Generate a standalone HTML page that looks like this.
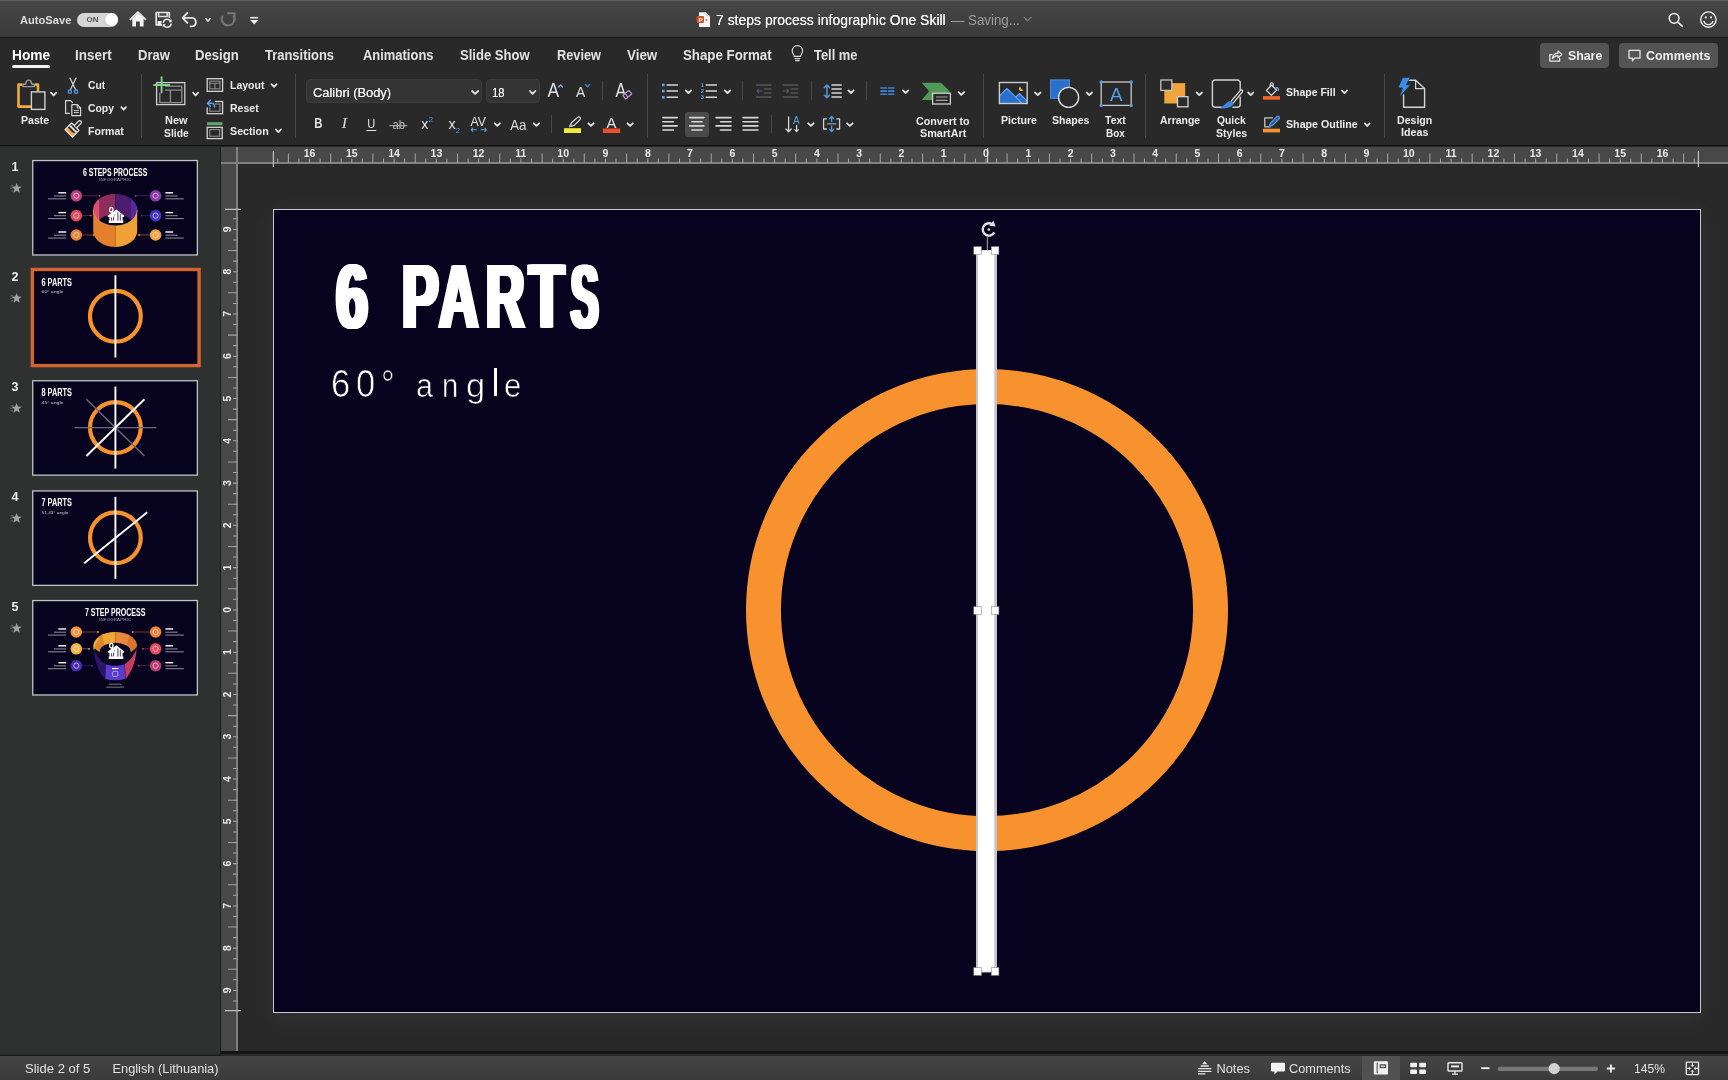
<!DOCTYPE html>
<html><head><meta charset="utf-8"><title>PowerPoint</title>
<style>

*{box-sizing:border-box;margin:0;padding:0}
html,body{width:1728px;height:1080px;overflow:hidden;background:#282828;font-family:"Liberation Sans",sans-serif;color:#e6e6e6}
#root{position:absolute;left:0;top:0;width:1728px;height:1080px;will-change:transform}
.abs{position:absolute}
.t{position:absolute;white-space:nowrap;line-height:1;transform-origin:0 50%}
#titlebar{position:absolute;left:0;top:0;width:1728px;height:38px;background:linear-gradient(#464646,#3a3a3a);border-top:1px solid #5c5c5c;border-bottom:1px solid #171717}
#ribbon{position:absolute;left:0;top:38px;width:1728px;height:108px;background:#292929;border-bottom:1px solid #101010}
#panel{position:absolute;left:0;top:147px;width:221px;height:907px;background:#2f3030}
#rulerh{position:absolute;left:221px;top:147px;width:1507px;height:17px;background:#484848}
#rlh{position:absolute;left:221px;top:162px;width:1507px;height:2px;background:#808080}
#rlv{position:absolute;left:236px;top:147px;width:2px;height:904px;background:#808080}
#pedge{position:absolute;left:220px;top:147px;width:1px;height:909px;background:#1e1e1e}
#rulerv{position:absolute;left:221px;top:147px;width:17px;height:904.5px;background:#484848}
#canvasbot{position:absolute;left:221px;top:1051px;width:1507px;height:5px;background:linear-gradient(#141414 0,#141414 55%,#2a2a2a 56%,#2a2a2a 100%)}
#status{position:absolute;left:0;top:1056px;width:1728px;height:24px;background:linear-gradient(#454545,#3a3a3a)}
#panelbot{position:absolute;left:0;top:1054.5px;width:221px;height:1.5px;background:#1a1a1a}
#slide{position:absolute;left:273px;top:209px;width:1428px;height:804px;background:#07021d;border:1.3px solid #c9c9d2;box-shadow:0 6px 26px 6px rgba(255,255,255,0.04)}
.tab{position:absolute;top:47px;font-size:14.2px;font-weight:bold;color:#e4e4e4;white-space:nowrap;line-height:16px;transform-origin:0 50%}
.lbl{position:absolute;font-size:11.3px;font-weight:bold;color:#e8e8e8;white-space:nowrap;line-height:12px;transform-origin:0 50%}
.sep{position:absolute;width:1px;background:#444;top:75px;height:63px}
.chev{position:absolute;width:9px;height:6px}

</style></head>
<body>
<div id="root">

<div id="titlebar"></div>
<div class="abs" style="left:77px;top:12.5px;width:41px;height:14px;border-radius:7px;background:#d6d6d6"></div>
<div class="abs" style="left:105px;top:13px;width:13px;height:13px;border-radius:7px;background:#fff;box-shadow:0 0 1px #888"></div>
<div class="t" style="left:86.5px;top:15.5px;font-size:8px;font-weight:bold;color:#555">ON</div>
<div class="t" style="left:19.6px;top:11px;line-height:18px;font-size:11.8px;color:#dedede;font-weight:bold;transform:scaleX(0.944);">AutoSave</div><div class="t" style="left:716.0px;top:10px;line-height:20px;font-size:14.2px;color:#f4f4f4;font-weight:normal;transform:scaleX(0.984);text-shadow:0 0 0.4px #f4f4f4;">7 steps process infographic One Skill</div><div class="t" style="left:950.5px;top:10px;line-height:20px;font-size:14px;color:#9c9c9c;font-weight:normal;transform:scaleX(0.951);">— Saving...</div>
<div id="ribbon"></div><div class="t" style="left:11.5px;top:45px;line-height:20px;font-size:14.6px;color:#ffffff;font-weight:bold;transform:scaleX(0.942);">Home</div><div class="t" style="left:74.6px;top:45px;line-height:20px;font-size:14.6px;color:#e2e2e2;font-weight:bold;transform:scaleX(0.923);">Insert</div><div class="t" style="left:137.5px;top:45px;line-height:20px;font-size:14.6px;color:#e2e2e2;font-weight:bold;transform:scaleX(0.891);">Draw</div><div class="t" style="left:194.8px;top:45px;line-height:20px;font-size:14.6px;color:#e2e2e2;font-weight:bold;transform:scaleX(0.900);">Design</div><div class="t" style="left:265.3px;top:45px;line-height:20px;font-size:14.6px;color:#e2e2e2;font-weight:bold;transform:scaleX(0.887);">Transitions</div><div class="t" style="left:362.9px;top:45px;line-height:20px;font-size:14.6px;color:#e2e2e2;font-weight:bold;transform:scaleX(0.887);">Animations</div><div class="t" style="left:460.4px;top:45px;line-height:20px;font-size:14.6px;color:#e2e2e2;font-weight:bold;transform:scaleX(0.895);">Slide Show</div><div class="t" style="left:557.1px;top:45px;line-height:20px;font-size:14.6px;color:#e2e2e2;font-weight:bold;transform:scaleX(0.876);">Review</div><div class="t" style="left:626.7px;top:45px;line-height:20px;font-size:14.6px;color:#e2e2e2;font-weight:bold;transform:scaleX(0.918);">View</div><div class="t" style="left:683.2px;top:45px;line-height:20px;font-size:14.6px;color:#e2e2e2;font-weight:bold;transform:scaleX(0.910);">Shape Format</div><div class="t" style="left:813.6px;top:45px;line-height:20px;font-size:14.6px;color:#e2e2e2;font-weight:bold;transform:scaleX(0.884);">Tell me</div><div class="abs" style="left:11.5px;top:65px;width:38.5px;height:3px;border-radius:1.5px;background:#f2f2f2"></div><div class="abs" style="left:1540px;top:42.7px;width:68.7px;height:25.6px;border-radius:4px;background:#545454"></div><div class="abs" style="left:1618.7px;top:42.7px;width:99.3px;height:25.6px;border-radius:4px;background:#545454"></div><div class="t" style="left:1567.7px;top:46px;line-height:19px;font-size:13.6px;color:#efefef;font-weight:bold;transform:scaleX(0.907);">Share</div><div class="t" style="left:1646.3px;top:46px;line-height:19px;font-size:13.6px;color:#efefef;font-weight:bold;transform:scaleX(0.916);">Comments</div>
<div class="t" style="left:20.8px;top:112px;line-height:16px;font-size:10.8px;color:#ebebeb;font-weight:bold;transform:scaleX(0.978);">Paste</div><div class="t" style="left:87.7px;top:77px;line-height:16px;font-size:10.8px;color:#ebebeb;font-weight:bold;transform:scaleX(0.961);">Cut</div><div class="t" style="left:87.7px;top:100px;line-height:16px;font-size:10.8px;color:#ebebeb;font-weight:bold;transform:scaleX(0.963);">Copy</div><div class="t" style="left:87.7px;top:123px;line-height:16px;font-size:10.8px;color:#ebebeb;font-weight:bold;transform:scaleX(0.981);">Format</div><div class="t" style="left:165.0px;top:112px;line-height:16px;font-size:10.8px;color:#ebebeb;font-weight:bold;transform:scaleX(1.013);">New</div><div class="t" style="left:163.7px;top:125px;line-height:16px;font-size:10.8px;color:#ebebeb;font-weight:bold;transform:scaleX(0.957);">Slide</div><div class="t" style="left:229.5px;top:77px;line-height:16px;font-size:10.8px;color:#ebebeb;font-weight:bold;transform:scaleX(0.972);">Layout</div><div class="t" style="left:229.5px;top:100px;line-height:16px;font-size:10.8px;color:#ebebeb;font-weight:bold;transform:scaleX(0.976);">Reset</div><div class="t" style="left:229.5px;top:123px;line-height:16px;font-size:10.8px;color:#ebebeb;font-weight:bold;transform:scaleX(0.992);">Section</div><div class="t" style="left:916.4px;top:113px;line-height:16px;font-size:10.8px;color:#ebebeb;font-weight:bold;transform:scaleX(0.993);">Convert to</div><div class="t" style="left:920.0px;top:125px;line-height:16px;font-size:10.8px;color:#ebebeb;font-weight:bold;transform:scaleX(1.004);">SmartArt</div><div class="t" style="left:1001.0px;top:112px;line-height:16px;font-size:10.8px;color:#ebebeb;font-weight:bold;transform:scaleX(0.983);">Picture</div><div class="t" style="left:1051.6px;top:112px;line-height:16px;font-size:10.8px;color:#ebebeb;font-weight:bold;transform:scaleX(0.976);">Shapes</div><div class="t" style="left:1105.2px;top:112px;line-height:16px;font-size:10.8px;color:#ebebeb;font-weight:bold;transform:scaleX(0.972);">Text</div><div class="t" style="left:1106.2px;top:125px;line-height:16px;font-size:10.8px;color:#ebebeb;font-weight:bold;transform:scaleX(0.921);">Box</div><div class="t" style="left:1160.0px;top:112px;line-height:16px;font-size:10.8px;color:#ebebeb;font-weight:bold;transform:scaleX(0.971);">Arrange</div><div class="t" style="left:1217.3px;top:112px;line-height:16px;font-size:10.8px;color:#ebebeb;font-weight:bold;transform:scaleX(0.956);">Quick</div><div class="t" style="left:1215.8px;top:125px;line-height:16px;font-size:10.8px;color:#ebebeb;font-weight:bold;transform:scaleX(0.980);">Styles</div><div class="t" style="left:1286.0px;top:84px;line-height:16px;font-size:10.8px;color:#ebebeb;font-weight:bold;transform:scaleX(0.972);">Shape Fill</div><div class="t" style="left:1286.0px;top:116px;line-height:16px;font-size:10.8px;color:#ebebeb;font-weight:bold;transform:scaleX(0.989);">Shape Outline</div><div class="t" style="left:1397.0px;top:112px;line-height:16px;font-size:10.8px;color:#ebebeb;font-weight:bold;transform:scaleX(0.980);">Design</div><div class="t" style="left:1400.5px;top:124px;line-height:16px;font-size:10.8px;color:#ebebeb;font-weight:bold;transform:scaleX(0.996);">Ideas</div><div class="abs" style="left:306.4px;top:79.3px;width:176.1px;height:24px;border-radius:4px;background:#343434;border:1px solid #3c3c3c"></div><div class="abs" style="left:485.6px;top:79.3px;width:54.2px;height:24px;border-radius:4px;background:#343434;border:1px solid #3c3c3c"></div><div class="t" style="left:312.7px;top:83px;line-height:19px;font-size:13px;color:#f0f0f0;font-weight:normal;transform:scaleX(0.992);text-shadow:0 0 0.5px #f0f0f0;">Calibri (Body)</div><div class="t" style="left:491.8px;top:83px;line-height:19px;font-size:13px;color:#f0f0f0;font-weight:normal;transform:scaleX(0.864);text-shadow:0 0 0.5px #f0f0f0;">18</div><div class="abs" style="left:685.2px;top:112px;width:23.8px;height:24.6px;border-radius:3px;background:#4a4a4a"></div><div class="abs" style="left:141.0px;top:74px;width:1px;height:63.6px;background:#474747"></div><div class="abs" style="left:294.6px;top:74px;width:1px;height:63.6px;background:#474747"></div><div class="abs" style="left:647.2px;top:74px;width:1px;height:63.6px;background:#474747"></div><div class="abs" style="left:983.4px;top:74px;width:1px;height:63.6px;background:#474747"></div><div class="abs" style="left:1144.9px;top:74px;width:1px;height:63.6px;background:#474747"></div><div class="abs" style="left:1383.5px;top:74px;width:1px;height:63.6px;background:#474747"></div><div class="abs" style="left:601.8px;top:81.4px;width:1px;height:18.6px;background:#474747"></div><div class="abs" style="left:551.3px;top:115.3px;width:1px;height:18.2px;background:#474747"></div><div class="abs" style="left:741.8px;top:81.4px;width:1px;height:18.6px;background:#474747"></div><div class="abs" style="left:811.1px;top:81.4px;width:1px;height:18.6px;background:#474747"></div><div class="abs" style="left:865.9px;top:81.4px;width:1px;height:18.6px;background:#474747"></div><div class="abs" style="left:770.9px;top:115.3px;width:1px;height:18.2px;background:#474747"></div>
<div id="panel"></div><svg class="abs" style="left:0;top:0" width="221" height="1080" viewBox="0 0 221 1080"><rect x="32.1" y="159.9" width="165.9" height="95.7" fill="#c2c2c6"/><rect x="33.4" y="161.2" width="163.3" height="93.1" fill="#07021d"/><text transform="translate(83.0 176.3) scale(0.668 1)" font-family="Liberation Sans" font-size="10.4" font-weight="bold" fill="#fff">6 STEPS PROCESS</text><text transform="translate(99.3 180.9) scale(1.388 1)" font-family="Liberation Sans" font-size="3.3" font-weight="normal" fill="#9a98ac">INFOGRAPHIC</text><path d="M93.2 209.9A22.0 16.0 0 0 1 115.2 193.9V225.9A22.0 16.0 0 0 1 93.2 209.9Z" fill="#8c2d5a"/><path d="M137.2 209.9A22.0 16.0 0 0 0 115.2 193.9V225.9A22.0 16.0 0 0 0 137.2 209.9Z" fill="#4c1c6e"/><path d="M93.2 209.9A22.0 16.0 0 0 1 99.2 198.9V220.9A22.0 16.0 0 0 1 93.2 209.9Z" fill="#de4e68"/><path d="M137.2 209.9A22.0 16.0 0 0 0 131.2 198.9V220.9A22.0 16.0 0 0 0 137.2 209.9Z" fill="#552a9c"/><ellipse cx="115.2" cy="221.1" rx="15.6" ry="6.6" fill="#0a0420"/><path d="M93.2 209.9A22.0 16.0 0 0 0 115.2 225.9V246.9A22.0 16.0 0 0 1 93.2 230.9Z" fill="#e57f2c"/><path d="M137.2 209.9A22.0 16.0 0 0 1 115.2 225.9V246.9A22.0 16.0 0 0 0 137.2 230.9Z" fill="#f0a034"/><path d="M93.2 209.9A22.0 16.0 0 0 0 137.2 209.9" fill="none" stroke="#ffb868" stroke-width="0.8" opacity="0.8"/><path d="M115.2 225.9V246.9" stroke="#b8621c" stroke-width="0.6"/><path d="M107.4 215.9L116.4 209.4L124.5 215.9L123.6 216.9H122.6V220.6H123.3V223.0H108.7V220.6H109.4V216.9H108.3Z" fill="#fff"/><path d="M111.6 217.4V220.6M114.3 214.6L113.2 220.6M117.9 212.4V220.6M120.3 214.4V220.6" stroke="#160a30" stroke-width="0.8" fill="none"/><ellipse cx="111.3" cy="209.7" rx="1.7" ry="2.3" fill="none" stroke="#fff" stroke-width="1.3"/><path d="M111.6 212.0L114.6 217.0" stroke="#fff" stroke-width="1.4"/><path d="M82 195.8H99.6" stroke="#bf3f78" stroke-width="0.6" opacity="0.75"/><circle cx="99.6" cy="195.8" r="0.9" fill="#bf3f78"/><path d="M150 195.8H135.6" stroke="#8a3aa8" stroke-width="0.6" opacity="0.75"/><circle cx="135.6" cy="195.8" r="0.9" fill="#8a3aa8"/><circle cx="76.3" cy="195.8" r="5.8" fill="#bf3f78"/><circle cx="155.6" cy="195.8" r="5.8" fill="#8a3aa8"/><circle cx="76.3" cy="195.8" r="2.6" fill="none" stroke="#ffffff" stroke-opacity="0.75" stroke-width="0.8"/><circle cx="155.6" cy="195.8" r="2.6" fill="none" stroke="#ffffff" stroke-opacity="0.75" stroke-width="0.8"/><rect x="58.4" y="192.1" width="7.8" height="1.4" fill="#fff"/><rect x="54" y="195.5" width="12.2" height="0.9" fill="#c8c8d4" opacity="0.8"/><rect x="48" y="198.4" width="18.2" height="0.9" fill="#c8c8d4" opacity="0.8"/><rect x="165.4" y="192.1" width="7.8" height="1.4" fill="#fff"/><rect x="165.4" y="195.5" width="12.2" height="0.9" fill="#c8c8d4" opacity="0.8"/><rect x="165.4" y="198.4" width="18.4" height="0.9" fill="#c8c8d4" opacity="0.8"/><path d="M82 215.6H91" stroke="#e54a5c" stroke-width="0.6" opacity="0.75"/><circle cx="91" cy="215.6" r="0.9" fill="#e54a5c"/><path d="M150 215.6H141.6" stroke="#4535bd" stroke-width="0.6" opacity="0.75"/><circle cx="141.6" cy="215.6" r="0.9" fill="#4535bd"/><circle cx="76.3" cy="215.6" r="5.8" fill="#e54a5c"/><circle cx="155.6" cy="215.6" r="5.8" fill="#4535bd"/><circle cx="76.3" cy="215.6" r="2.6" fill="none" stroke="#ffffff" stroke-opacity="0.75" stroke-width="0.8"/><circle cx="155.6" cy="215.6" r="2.6" fill="none" stroke="#ffffff" stroke-opacity="0.75" stroke-width="0.8"/><rect x="58.4" y="211.9" width="7.8" height="1.4" fill="#fff"/><rect x="54" y="215.3" width="12.2" height="0.9" fill="#c8c8d4" opacity="0.8"/><rect x="48" y="218.2" width="18.2" height="0.9" fill="#c8c8d4" opacity="0.8"/><rect x="165.4" y="211.9" width="7.8" height="1.4" fill="#fff"/><rect x="165.4" y="215.3" width="12.2" height="0.9" fill="#c8c8d4" opacity="0.8"/><rect x="165.4" y="218.2" width="18.4" height="0.9" fill="#c8c8d4" opacity="0.8"/><path d="M82 235.0H93.6" stroke="#f07f3a" stroke-width="0.6" opacity="0.75"/><circle cx="93.6" cy="235.0" r="0.9" fill="#f07f3a"/><path d="M150 235.0H139" stroke="#f5a243" stroke-width="0.6" opacity="0.75"/><circle cx="139" cy="235.0" r="0.9" fill="#f5a243"/><circle cx="76.3" cy="235.0" r="5.8" fill="#f07f3a"/><circle cx="155.6" cy="235.0" r="5.8" fill="#f5a243"/><circle cx="76.3" cy="235.0" r="2.6" fill="none" stroke="#ffffff" stroke-opacity="0.75" stroke-width="0.8"/><circle cx="155.6" cy="235.0" r="2.6" fill="none" stroke="#ffffff" stroke-opacity="0.75" stroke-width="0.8"/><rect x="58.4" y="231.3" width="7.8" height="1.4" fill="#fff"/><rect x="54" y="234.7" width="12.2" height="0.9" fill="#c8c8d4" opacity="0.8"/><rect x="48" y="237.6" width="18.2" height="0.9" fill="#c8c8d4" opacity="0.8"/><rect x="165.4" y="231.3" width="7.8" height="1.4" fill="#fff"/><rect x="165.4" y="234.7" width="12.2" height="0.9" fill="#c8c8d4" opacity="0.8"/><rect x="165.4" y="237.6" width="18.4" height="0.9" fill="#c8c8d4" opacity="0.8"/><rect x="30.7" y="267.8" width="170.1" height="99.5" fill="#d2652f"/><rect x="34.1" y="271.2" width="163.3" height="92.7" fill="#07021d"/><text transform="translate(41.5 285.8) scale(0.681 1)" font-family="Liberation Sans" font-size="10.8" font-weight="bold" fill="#fff">6 PARTS</text><text transform="translate(41.5 293.2) scale(1.298 1)" font-family="Liberation Sans" font-size="4.0" font-weight="normal" fill="#cfcfda">60° angle</text><circle cx="115.4" cy="316.3" r="25.4" fill="none" stroke="#f7922d" stroke-width="4.2"/><path d="M115.4 275.3L115.4 357.5" stroke="#ffffff" stroke-width="1.9"/><rect x="32.1" y="380.1" width="165.9" height="95.7" fill="#c2c2c6"/><rect x="33.4" y="381.4" width="163.3" height="93.1" fill="#07021d"/><text transform="translate(41.5 396.2) scale(0.681 1)" font-family="Liberation Sans" font-size="10.8" font-weight="bold" fill="#fff">8 PARTS</text><text transform="translate(41.5 403.6) scale(1.298 1)" font-family="Liberation Sans" font-size="4.0" font-weight="normal" fill="#cfcfda">45° angle</text><circle cx="115.4" cy="427.6" r="25.4" fill="none" stroke="#f7922d" stroke-width="4.2"/><path d="M74.4 427.6L156.4 427.6" stroke="#6b687c" stroke-width="1.4"/><path d="M86.4 399.2L144.4 456.0" stroke="#6b687c" stroke-width="1.4"/><path d="M115.4 386.6L115.4 468.6" stroke="#ffffff" stroke-width="1.9"/><path d="M86.4 456.0L144.4 399.2" stroke="#ffffff" stroke-width="1.9"/><rect x="32.1" y="490.3" width="165.9" height="95.7" fill="#c2c2c6"/><rect x="33.4" y="491.6" width="163.3" height="93.1" fill="#07021d"/><text transform="translate(41.5 506.4) scale(0.681 1)" font-family="Liberation Sans" font-size="10.8" font-weight="bold" fill="#fff">7 PARTS</text><text transform="translate(41.5 513.8) scale(1.200 1)" font-family="Liberation Sans" font-size="4.0" font-weight="normal" fill="#cfcfda">51,43° angle</text><circle cx="115.4" cy="537.8" r="25.4" fill="none" stroke="#f7922d" stroke-width="4.2"/><path d="M115.4 496.8L115.4 578.8" stroke="#ffffff" stroke-width="1.9"/><path d="M84.2 563.2L147.2 512.2" stroke="#ffffff" stroke-width="1.9"/><rect x="32.1" y="599.9" width="165.9" height="95.7" fill="#c2c2c6"/><rect x="33.4" y="601.2" width="163.3" height="93.1" fill="#07021d"/><text transform="translate(84.9 616.3) scale(0.678 1)" font-family="Liberation Sans" font-size="10.4" font-weight="bold" fill="#fff">7 STEP PROCESS</text><text transform="translate(99.3 620.9) scale(1.388 1)" font-family="Liberation Sans" font-size="3.3" font-weight="normal" fill="#9a98ac">INFOGRAPHIC</text><path d="M93.5 646.4A21.7 13.5 0 0 1 115.2 631.9V654.9A21.7 11.5 0 0 1 93.5 646.4Z" fill="#dd8a2c"/><path d="M136.9 646.4A21.7 13.5 0 0 0 115.2 631.9V654.9A21.7 11.5 0 0 0 136.9 646.4Z" fill="#d8742e"/><path d="M102.2 634.8L106.2 652.4L114.8 653.4V631.9Q108.2 632.3 102.2 634.8Z" fill="#f0a83a"/><path d="M115.60000000000001 631.9V653.4L125.2 652.4L129.2 635.4Q122.2 632.3 115.60000000000001 631.9Z" fill="#e8883a"/><path d="M93.9 649.4Q94.1 642.4 98.5 638.4" fill="none" stroke="#f2c445" stroke-width="1.3"/><ellipse cx="115.2" cy="651.4" rx="15.4" ry="8.6" fill="#0a0420"/><path d="M93.8 648.4C94.5 661.4 98.5 671.4 104.7 678.9L105.60000000000001 664.0C101.2 661.4 96.2 655.4 93.8 648.4Z" fill="#2b1568"/><path d="M136.6 648.4C135.9 661.4 131.9 671.4 125.7 678.9L124.8 664.0C129.2 661.4 134.2 655.4 136.6 648.4Z" fill="#c63c5e"/><path d="M105.8 664.1999999999999Q115.2 667.4 124.60000000000001 664.1999999999999L125.2 679.0Q115.2 681.6 105.2 679.0Z" fill="#5a3bcc"/><rect x="112.0" y="668.0" width="6.4" height="1.1" fill="#fff"/><rect x="112.6" y="671.4" width="5.2" height="5" rx="1" fill="none" stroke="#e6e0ff" stroke-width="0.6"/><rect x="109" y="683.7" width="12.4" height="0.9" fill="#b8b8c8" opacity="0.7"/><rect x="106.4" y="686.7" width="17.6" height="0.9" fill="#b8b8c8" opacity="0.7"/><path d="M107.4 651.8L116.4 645.3L124.5 651.8L123.6 652.8H122.6V656.5H123.3V658.9H108.7V656.5H109.4V652.8H108.3Z" fill="#fff"/><path d="M111.6 653.3V656.5M114.3 650.5L113.2 656.5M117.9 648.3V656.5M120.3 650.3V656.5" stroke="#160a30" stroke-width="0.8" fill="none"/><ellipse cx="111.3" cy="645.6" rx="1.7" ry="2.3" fill="none" stroke="#fff" stroke-width="1.3"/><path d="M111.6 647.9L114.6 652.9" stroke="#fff" stroke-width="1.4"/><path d="M82 632.0H98" stroke="#f5923a" stroke-width="0.6" opacity="0.75"/><circle cx="98" cy="632.0" r="0.9" fill="#f5923a"/><path d="M150 632.0H132.6" stroke="#f07f3a" stroke-width="0.6" opacity="0.75"/><circle cx="132.6" cy="632.0" r="0.9" fill="#f07f3a"/><circle cx="76.3" cy="632.0" r="5.8" fill="#f5923a"/><circle cx="155.6" cy="632.0" r="5.8" fill="#f07f3a"/><circle cx="76.3" cy="632.0" r="2.6" fill="none" stroke="#ffffff" stroke-opacity="0.75" stroke-width="0.8"/><circle cx="155.6" cy="632.0" r="2.6" fill="none" stroke="#ffffff" stroke-opacity="0.75" stroke-width="0.8"/><rect x="58.4" y="628.3" width="7.8" height="1.4" fill="#fff"/><rect x="54" y="631.7" width="12.2" height="0.9" fill="#c8c8d4" opacity="0.8"/><rect x="48" y="634.6" width="18.2" height="0.9" fill="#c8c8d4" opacity="0.8"/><rect x="165.4" y="628.3" width="7.8" height="1.4" fill="#fff"/><rect x="165.4" y="631.7" width="12.2" height="0.9" fill="#c8c8d4" opacity="0.8"/><rect x="165.4" y="634.6" width="18.4" height="0.9" fill="#c8c8d4" opacity="0.8"/><path d="M82 648.8H89" stroke="#f5b243" stroke-width="0.6" opacity="0.75"/><circle cx="89" cy="648.8" r="0.9" fill="#f5b243"/><path d="M150 648.8H143" stroke="#e54a5c" stroke-width="0.6" opacity="0.75"/><circle cx="143" cy="648.8" r="0.9" fill="#e54a5c"/><circle cx="76.3" cy="648.8" r="5.8" fill="#f5b243"/><circle cx="155.6" cy="648.8" r="5.8" fill="#e54a5c"/><circle cx="76.3" cy="648.8" r="2.6" fill="none" stroke="#ffffff" stroke-opacity="0.75" stroke-width="0.8"/><circle cx="155.6" cy="648.8" r="2.6" fill="none" stroke="#ffffff" stroke-opacity="0.75" stroke-width="0.8"/><rect x="58.4" y="645.1" width="7.8" height="1.4" fill="#fff"/><rect x="54" y="648.5" width="12.2" height="0.9" fill="#c8c8d4" opacity="0.8"/><rect x="48" y="651.4" width="18.2" height="0.9" fill="#c8c8d4" opacity="0.8"/><rect x="165.4" y="645.1" width="7.8" height="1.4" fill="#fff"/><rect x="165.4" y="648.5" width="12.2" height="0.9" fill="#c8c8d4" opacity="0.8"/><rect x="165.4" y="651.4" width="18.4" height="0.9" fill="#c8c8d4" opacity="0.8"/><path d="M82 665.7H92" stroke="#4a2ab2" stroke-width="0.6" opacity="0.75"/><circle cx="92" cy="665.7" r="0.9" fill="#4a2ab2"/><path d="M150 665.7H138.6" stroke="#b93a74" stroke-width="0.6" opacity="0.75"/><circle cx="138.6" cy="665.7" r="0.9" fill="#b93a74"/><circle cx="76.3" cy="665.7" r="5.8" fill="#4a2ab2"/><circle cx="155.6" cy="665.7" r="5.8" fill="#b93a74"/><circle cx="76.3" cy="665.7" r="2.6" fill="none" stroke="#ffffff" stroke-opacity="0.75" stroke-width="0.8"/><circle cx="155.6" cy="665.7" r="2.6" fill="none" stroke="#ffffff" stroke-opacity="0.75" stroke-width="0.8"/><rect x="58.4" y="662.0" width="7.8" height="1.4" fill="#fff"/><rect x="54" y="665.4" width="12.2" height="0.9" fill="#c8c8d4" opacity="0.8"/><rect x="48" y="668.3" width="18.2" height="0.9" fill="#c8c8d4" opacity="0.8"/><rect x="165.4" y="662.0" width="7.8" height="1.4" fill="#fff"/><rect x="165.4" y="665.4" width="12.2" height="0.9" fill="#c8c8d4" opacity="0.8"/><rect x="165.4" y="668.3" width="18.4" height="0.9" fill="#c8c8d4" opacity="0.8"/><text x="14.9" y="171.2" text-anchor="middle" font-family="Liberation Sans" font-size="12.6" font-weight="bold" fill="#f2f2f2">1</text><polygon points="16.6,183.0 18.0,186.5 21.7,186.7 18.8,189.1 19.8,192.8 16.6,190.7 13.4,192.8 14.4,189.1 11.5,186.7 15.2,186.5" fill="#a2a2a2"/><path d="M10.6 185.8H13.6M10 188.2H12.4M10.8 190.8H13" stroke="#6e6e6e" stroke-width="0.9"/><text x="14.9" y="281.2" text-anchor="middle" font-family="Liberation Sans" font-size="12.6" font-weight="bold" fill="#f2f2f2">2</text><polygon points="16.6,293.0 18.0,296.5 21.7,296.7 18.8,299.1 19.8,302.8 16.6,300.7 13.4,302.8 14.4,299.1 11.5,296.7 15.2,296.5" fill="#a2a2a2"/><path d="M10.6 295.8H13.6M10 298.2H12.4M10.8 300.8H13" stroke="#6e6e6e" stroke-width="0.9"/><text x="14.9" y="391.2" text-anchor="middle" font-family="Liberation Sans" font-size="12.6" font-weight="bold" fill="#f2f2f2">3</text><polygon points="16.6,403.0 18.0,406.5 21.7,406.7 18.8,409.1 19.8,412.8 16.6,410.7 13.4,412.8 14.4,409.1 11.5,406.7 15.2,406.5" fill="#a2a2a2"/><path d="M10.6 405.8H13.6M10 408.2H12.4M10.8 410.8H13" stroke="#6e6e6e" stroke-width="0.9"/><text x="14.9" y="501.2" text-anchor="middle" font-family="Liberation Sans" font-size="12.6" font-weight="bold" fill="#f2f2f2">4</text><polygon points="16.6,513.0 18.0,516.5 21.7,516.7 18.8,519.1 19.8,522.8 16.6,520.7 13.4,522.8 14.4,519.1 11.5,516.7 15.2,516.5" fill="#a2a2a2"/><path d="M10.6 515.8H13.6M10 518.2H12.4M10.8 520.8H13" stroke="#6e6e6e" stroke-width="0.9"/><text x="14.9" y="611.2" text-anchor="middle" font-family="Liberation Sans" font-size="12.6" font-weight="bold" fill="#f2f2f2">5</text><polygon points="16.6,623.0 18.0,626.5 21.7,626.7 18.8,629.1 19.8,632.8 16.6,630.7 13.4,632.8 14.4,629.1 11.5,626.7 15.2,626.5" fill="#a2a2a2"/><path d="M10.6 625.8H13.6M10 628.2H12.4M10.8 630.8H13" stroke="#6e6e6e" stroke-width="0.9"/></svg>
<div id="rulerh"></div><div id="rulerv"></div><div id="canvasbot"></div><div id="rlh"></div><div id="rlv"></div><div id="pedge"></div><div id="panelbot"></div>
<svg id="rulers" width="1728" height="1080" viewBox="0 0 1728 1080" style="position:absolute;left:0;top:0;font-family:'Liberation Sans',sans-serif">
<path d="M277.8 158.5v4.5M298.9 158.5v4.5M309.5 158.5v4.5M320.1 158.5v4.5M341.2 158.5v4.5M351.8 158.5v4.5M362.4 158.5v4.5M383.5 158.5v4.5M394.1 158.5v4.5M404.6 158.5v4.5M425.8 158.5v4.5M436.4 158.5v4.5M446.9 158.5v4.5M468.1 158.5v4.5M478.6 158.5v4.5M489.2 158.5v4.5M510.3 158.5v4.5M520.9 158.5v4.5M531.5 158.5v4.5M552.6 158.5v4.5M563.2 158.5v4.5M573.8 158.5v4.5M594.9 158.5v4.5M605.5 158.5v4.5M616.0 158.5v4.5M637.2 158.5v4.5M647.8 158.5v4.5M658.3 158.5v4.5M679.5 158.5v4.5M690.0 158.5v4.5M700.6 158.5v4.5M721.8 158.5v4.5M732.3 158.5v4.5M742.9 158.5v4.5M764.0 158.5v4.5M774.6 158.5v4.5M785.2 158.5v4.5M806.3 158.5v4.5M816.9 158.5v4.5M827.5 158.5v4.5M848.6 158.5v4.5M859.2 158.5v4.5M869.7 158.5v4.5M890.9 158.5v4.5M901.4 158.5v4.5M912.0 158.5v4.5M933.1 158.5v4.5M943.7 158.5v4.5M954.3 158.5v4.5M975.4 158.5v4.5M986.0 158.5v4.5M996.6 158.5v4.5M1017.7 158.5v4.5M1028.3 158.5v4.5M1038.8 158.5v4.5M1060.0 158.5v4.5M1070.6 158.5v4.5M1081.1 158.5v4.5M1102.3 158.5v4.5M1112.8 158.5v4.5M1123.4 158.5v4.5M1144.5 158.5v4.5M1155.1 158.5v4.5M1165.7 158.5v4.5M1186.8 158.5v4.5M1197.4 158.5v4.5M1208.0 158.5v4.5M1229.1 158.5v4.5M1239.7 158.5v4.5M1250.2 158.5v4.5M1271.4 158.5v4.5M1282.0 158.5v4.5M1292.5 158.5v4.5M1313.7 158.5v4.5M1324.2 158.5v4.5M1334.8 158.5v4.5M1356.0 158.5v4.5M1366.5 158.5v4.5M1377.1 158.5v4.5M1398.2 158.5v4.5M1408.8 158.5v4.5M1419.4 158.5v4.5M1440.5 158.5v4.5M1451.1 158.5v4.5M1461.7 158.5v4.5M1482.8 158.5v4.5M1493.4 158.5v4.5M1503.9 158.5v4.5M1525.1 158.5v4.5M1535.6 158.5v4.5M1546.2 158.5v4.5M1567.3 158.5v4.5M1577.9 158.5v4.5M1588.5 158.5v4.5M1609.6 158.5v4.5M1620.2 158.5v4.5M1630.8 158.5v4.5M1651.9 158.5v4.5M1662.5 158.5v4.5M1673.1 158.5v4.5M1694.2 158.5v4.5" stroke="#a2a2a2" stroke-width="1.05" fill="none"/><path d="M288.4 153.5v9.5M330.7 153.5v9.5M372.9 153.5v9.5M415.2 153.5v9.5M457.5 153.5v9.5M499.8 153.5v9.5M542.1 153.5v9.5M584.3 153.5v9.5M626.6 153.5v9.5M668.9 153.5v9.5M711.2 153.5v9.5M753.5 153.5v9.5M795.7 153.5v9.5M838.0 153.5v9.5M880.3 153.5v9.5M922.6 153.5v9.5M964.9 153.5v9.5M1007.1 153.5v9.5M1049.4 153.5v9.5M1091.7 153.5v9.5M1134.0 153.5v9.5M1176.3 153.5v9.5M1218.5 153.5v9.5M1260.8 153.5v9.5M1303.1 153.5v9.5M1345.4 153.5v9.5M1387.7 153.5v9.5M1429.9 153.5v9.5M1472.2 153.5v9.5M1514.5 153.5v9.5M1556.8 153.5v9.5M1599.1 153.5v9.5M1641.3 153.5v9.5M1683.6 153.5v9.5" stroke="#a2a2a2" stroke-width="1.05" fill="none"/><path d="M273.4 151v16M1698.4 151v16" stroke="#bcbcbc" stroke-width="1.25"/><path d="M987.6 148v15" stroke="#bcbcbc" stroke-width="1.25"/><g font-size="10.5" fill="#ececec" text-anchor="middle" font-weight="bold"><text x="309.5" y="157.3">16</text><text x="351.8" y="157.3">15</text><text x="394.1" y="157.3">14</text><text x="436.4" y="157.3">13</text><text x="478.6" y="157.3">12</text><text x="520.9" y="157.3">11</text><text x="563.2" y="157.3">10</text><text x="605.5" y="157.3">9</text><text x="647.8" y="157.3">8</text><text x="690.0" y="157.3">7</text><text x="732.3" y="157.3">6</text><text x="774.6" y="157.3">5</text><text x="816.9" y="157.3">4</text><text x="859.2" y="157.3">3</text><text x="901.4" y="157.3">2</text><text x="943.7" y="157.3">1</text><text x="986.0" y="157.3">0</text><text x="1028.3" y="157.3">1</text><text x="1070.6" y="157.3">2</text><text x="1112.8" y="157.3">3</text><text x="1155.1" y="157.3">4</text><text x="1197.4" y="157.3">5</text><text x="1239.7" y="157.3">6</text><text x="1282.0" y="157.3">7</text><text x="1324.2" y="157.3">8</text><text x="1366.5" y="157.3">9</text><text x="1408.8" y="157.3">10</text><text x="1451.1" y="157.3">11</text><text x="1493.4" y="157.3">12</text><text x="1535.6" y="157.3">13</text><text x="1577.9" y="157.3">14</text><text x="1620.2" y="157.3">15</text><text x="1662.5" y="157.3">16</text></g>
<path d="M233 218.8h4.5M233 229.4h4.5M233 239.9h4.5M228 250.5h9.5M233 261.1h4.5M233 271.7h4.5M233 282.2h4.5M228 292.8h9.5M233 303.4h4.5M233 313.9h4.5M233 324.5h4.5M228 335.1h9.5M233 345.6h4.5M233 356.2h4.5M233 366.8h4.5M228 377.4h9.5M233 387.9h4.5M233 398.5h4.5M233 409.1h4.5M228 419.6h9.5M233 430.2h4.5M233 440.8h4.5M233 451.3h4.5M228 461.9h9.5M233 472.5h4.5M233 483.1h4.5M233 493.6h4.5M228 504.2h9.5M233 514.8h4.5M233 525.3h4.5M233 535.9h4.5M228 546.5h9.5M233 557.0h4.5M233 567.6h4.5M233 578.2h4.5M228 588.8h9.5M233 599.3h4.5M233 609.9h4.5M233 620.5h4.5M228 631.0h9.5M233 641.6h4.5M233 652.2h4.5M233 662.8h4.5M228 673.3h9.5M233 683.9h4.5M233 694.5h4.5M233 705.0h4.5M228 715.6h9.5M233 726.2h4.5M233 736.7h4.5M233 747.3h4.5M228 757.9h9.5M233 768.5h4.5M233 779.0h4.5M233 789.6h4.5M228 800.2h9.5M233 810.7h4.5M233 821.3h4.5M233 831.9h4.5M228 842.4h9.5M233 853.0h4.5M233 863.6h4.5M233 874.1h4.5M228 884.7h9.5M233 895.3h4.5M233 905.9h4.5M233 916.4h4.5M228 927.0h9.5M233 937.6h4.5M233 948.1h4.5M233 958.7h4.5M228 969.3h9.5M233 979.8h4.5M233 990.4h4.5M233 1001.0h4.5" stroke="#a2a2a2" stroke-width="1.05" fill="none"/><path d="M225 209.4h16M225 1010.5h16" stroke="#bcbcbc" stroke-width="1.25"/><g font-size="10.5" fill="#ececec" text-anchor="middle" font-weight="bold"><text transform="translate(231.3 229.4) rotate(-90)" x="0" y="0">9</text><text transform="translate(231.3 271.7) rotate(-90)" x="0" y="0">8</text><text transform="translate(231.3 313.9) rotate(-90)" x="0" y="0">7</text><text transform="translate(231.3 356.2) rotate(-90)" x="0" y="0">6</text><text transform="translate(231.3 398.5) rotate(-90)" x="0" y="0">5</text><text transform="translate(231.3 440.8) rotate(-90)" x="0" y="0">4</text><text transform="translate(231.3 483.1) rotate(-90)" x="0" y="0">3</text><text transform="translate(231.3 525.3) rotate(-90)" x="0" y="0">2</text><text transform="translate(231.3 567.6) rotate(-90)" x="0" y="0">1</text><text transform="translate(231.3 609.9) rotate(-90)" x="0" y="0">0</text><text transform="translate(231.3 652.2) rotate(-90)" x="0" y="0">1</text><text transform="translate(231.3 694.5) rotate(-90)" x="0" y="0">2</text><text transform="translate(231.3 736.7) rotate(-90)" x="0" y="0">3</text><text transform="translate(231.3 779.0) rotate(-90)" x="0" y="0">4</text><text transform="translate(231.3 821.3) rotate(-90)" x="0" y="0">5</text><text transform="translate(231.3 863.6) rotate(-90)" x="0" y="0">6</text><text transform="translate(231.3 905.9) rotate(-90)" x="0" y="0">7</text><text transform="translate(231.3 948.1) rotate(-90)" x="0" y="0">8</text><text transform="translate(231.3 990.4) rotate(-90)" x="0" y="0">9</text></g>
</svg>
<div id="slide"></div><svg class="abs" style="left:0;top:0" width="1728" height="1080" viewBox="0 0 1728 1080">
<circle cx="987" cy="610.1" r="223.5" fill="none" stroke="#f7922e" stroke-width="35"/>
<rect x="976" y="250" width="21" height="722.5" fill="#c4c4d0"/>
<rect x="978" y="250.6" width="16.3" height="721" fill="#ffffff"/>
<path d="M987.3 236V250" stroke="#b0b0b8" stroke-width="1"/>
<circle cx="988.8" cy="229.4" r="8.2" fill="#05011a"/>
<path d="M994.4 232.4A6.2 6.2 0 1 1 991.9 224" fill="none" stroke="#e2e2e2" stroke-width="2.4"/>
<path d="M995.6 226.4L993.4 220.8L989.4 225.8Z" fill="#e2e2e2"/>
<circle cx="988.8" cy="229.5" r="1.3" fill="#dedede"/>
<rect x="973.8" y="246.7" width="7.6" height="7.6" fill="#fff" stroke="#8a8a92" stroke-width="0.6"/><rect x="973.8" y="606.7" width="7.6" height="7.6" fill="#fff" stroke="#8a8a92" stroke-width="0.6"/><rect x="973.8" y="967.7" width="7.6" height="7.6" fill="#fff" stroke="#8a8a92" stroke-width="0.6"/><rect x="991.3" y="246.7" width="7.6" height="7.6" fill="#fff" stroke="#8a8a92" stroke-width="0.6"/><rect x="991.3" y="606.7" width="7.6" height="7.6" fill="#fff" stroke="#8a8a92" stroke-width="0.6"/><rect x="991.3" y="967.7" width="7.6" height="7.6" fill="#fff" stroke="#8a8a92" stroke-width="0.6"/></svg><div class="t" style="left:335.70px;top:243px;line-height:106px;font-size:91.3px;color:#fff;transform-origin:0 50%;transform:scaleX(0.630);font-weight:bold;text-shadow:1.40px 0 0 #fff,-1.40px 0 0 #fff,2.77px 0 0 #fff,-2.77px 0 0 #fff,4.13px 0 0 #fff,-4.13px 0 0 #fff;">6</div><div class="t" style="left:401.50px;top:243px;line-height:106px;font-size:91.3px;color:#fff;transform-origin:0 50%;transform:scaleX(0.601);font-weight:bold;text-shadow:1.47px 0 0 #fff,-1.47px 0 0 #fff,2.90px 0 0 #fff,-2.90px 0 0 #fff,4.32px 0 0 #fff,-4.32px 0 0 #fff;">P</div><div class="t" style="left:439.20px;top:243px;line-height:106px;font-size:91.3px;color:#fff;transform-origin:0 50%;transform:scaleX(0.596);font-weight:bold;text-shadow:1.48px 0 0 #fff,-1.48px 0 0 #fff,2.92px 0 0 #fff,-2.92px 0 0 #fff,4.36px 0 0 #fff,-4.36px 0 0 #fff;">A</div><div class="t" style="left:485.70px;top:243px;line-height:106px;font-size:91.3px;color:#fff;transform-origin:0 50%;transform:scaleX(0.584);font-weight:bold;text-shadow:1.51px 0 0 #fff,-1.51px 0 0 #fff,2.98px 0 0 #fff,-2.98px 0 0 #fff,4.45px 0 0 #fff,-4.45px 0 0 #fff;">R</div><div class="t" style="left:528.50px;top:243px;line-height:106px;font-size:91.3px;color:#fff;transform-origin:0 50%;transform:scaleX(0.632);font-weight:bold;text-shadow:1.40px 0 0 #fff,-1.40px 0 0 #fff,2.76px 0 0 #fff,-2.76px 0 0 #fff,4.11px 0 0 #fff,-4.11px 0 0 #fff;">T</div><div class="t" style="left:570.90px;top:243px;line-height:106px;font-size:91.3px;color:#fff;transform-origin:0 50%;transform:scaleX(0.448);font-weight:bold;text-shadow:1.97px 0 0 #fff,-1.97px 0 0 #fff,3.89px 0 0 #fff,-3.89px 0 0 #fff,5.80px 0 0 #fff,-5.80px 0 0 #fff;">S</div><div class="t" style="left:330.98px;top:361px;line-height:46px;font-size:38px;color:#fff;transform-origin:0 50%;transform:scaleX(0.907);font-weight:normal;-webkit-text-stroke:0.7px #07021d;">6</div><div class="t" style="left:355.98px;top:361px;line-height:46px;font-size:38px;color:#fff;transform-origin:0 50%;transform:scaleX(0.907);font-weight:normal;-webkit-text-stroke:0.7px #07021d;">0</div><div class="t" style="left:380.99px;top:361px;line-height:46px;font-size:38px;color:#fff;transform-origin:0 50%;transform:scaleX(0.897);font-weight:normal;-webkit-text-stroke:0.7px #07021d;">°</div><div class="t" style="left:416.22px;top:366px;line-height:40px;font-size:32.5px;color:#fff;transform-origin:0 50%;transform:scaleX(0.943);font-weight:normal;-webkit-text-stroke:0.6px #07021d;">a</div><div class="t" style="left:442.13px;top:366px;line-height:40px;font-size:32.5px;color:#fff;transform-origin:0 50%;transform:scaleX(0.900);font-weight:normal;-webkit-text-stroke:0.6px #07021d;">n</div><div class="t" style="left:466.18px;top:366px;line-height:40px;font-size:32.5px;color:#fff;transform-origin:0 50%;transform:scaleX(1.061);font-weight:normal;-webkit-text-stroke:0.6px #07021d;">g</div><div class="t" style="left:504.11px;top:366px;line-height:40px;font-size:32.5px;color:#fff;transform-origin:0 50%;transform:scaleX(0.958);font-weight:normal;-webkit-text-stroke:0.6px #07021d;">e</div><div class="abs" style="left:494.4px;top:367.8px;width:2.3px;height:28.7px;background:#fff"></div>
<div id="status"></div><div class="abs" style="left:1362.3px;top:1056px;width:37.6px;height:24px;background:#515151"></div><div class="t" style="left:25.3px;top:1059px;line-height:19px;font-size:12.8px;color:#e2e2e2;font-weight:normal;transform:scaleX(1.020);">Slide 2 of 5</div><div class="t" style="left:112.5px;top:1059px;line-height:19px;font-size:12.8px;color:#e2e2e2;font-weight:normal;">English (Lithuania)</div><div class="t" style="left:1216.5px;top:1059px;line-height:19px;font-size:12.8px;color:#e2e2e2;font-weight:normal;">Notes</div><div class="t" style="left:1289.4px;top:1059px;line-height:19px;font-size:12.8px;color:#e2e2e2;font-weight:normal;transform:scaleX(0.995);">Comments</div><div class="t" style="left:1633.5px;top:1059px;line-height:19px;font-size:12.8px;color:#e2e2e2;font-weight:normal;transform:scaleX(0.947);">145%</div><svg class="abs" style="left:0;top:1040px" width="1728" height="40" viewBox="0 1040 1728 40"><path d="M1204.7 1061.2L1207.4 1064.2H1202Z" fill="#e6e6e6"/><path d="M1200.6 1066H1208.8M1198 1068.7H1211.4M1198 1071.3H1211.4M1198 1073.8H1205.4" stroke="#e6e6e6" stroke-width="1.3" fill="none"/><path d="M1272 1062.8H1284A1 1 0 0 1 1285 1063.8V1070.4A1 1 0 0 1 1284 1071.4H1277.6L1274.4 1074.4V1071.4H1272A1 1 0 0 1 1271 1070.4V1063.8A1 1 0 0 1 1272 1062.8Z" fill="#f0f0f0"/><rect x="1373.8" y="1061.2" width="14.2" height="13.4" rx="1.2" fill="#f2f2f2"/><rect x="1376.6" y="1062.6" width="1.1" height="10.6" fill="#515151"/><rect x="1379.6" y="1064.2" width="6.6" height="4" fill="#515151"/><rect x="1380.8" y="1065.6" width="4.2" height="1.2" fill="#f2f2f2"/><rect x="1410.2" y="1062.8" width="6.8" height="4.4" rx="1" fill="#f0f0f0"/><rect x="1410.2" y="1069.6" width="6.8" height="4.4" rx="1" fill="#f0f0f0"/><rect x="1419.2" y="1062.8" width="6.8" height="4.4" rx="1" fill="#f0f0f0"/><rect x="1419.2" y="1069.6" width="6.8" height="4.4" rx="1" fill="#f0f0f0"/><rect x="1448" y="1062.7" width="14" height="8.3" rx="0.8" fill="none" stroke="#e8e8e8" stroke-width="1.4"/><rect x="1451" y="1065.4" width="8" height="2" fill="#e8e8e8"/><path d="M1455 1071V1073.6M1452 1074.2H1458" stroke="#e8e8e8" stroke-width="1.3"/><rect x="1481.2" y="1067.2" width="8.3" height="1.9" fill="#ececec"/><rect x="1497.6" y="1066.7" width="100.5" height="4.2" rx="2.1" fill="#777"/><circle cx="1554.2" cy="1068.6" r="5.6" fill="#d2d2d2"/><path d="M1606.8 1068.5H1615M1610.9 1064.4V1072.6" stroke="#ececec" stroke-width="1.9"/><rect x="1686.3" y="1062.2" width="12.2" height="12.4" rx="0.8" fill="none" stroke="#e8e8e8" stroke-width="1.3"/><path d="M1692.4 1062.4V1066.2M1692.4 1074.4V1070.6M1686.6 1068.4H1690.2M1698.2 1068.4H1694.6" stroke="#e8e8e8" stroke-width="1.1"/><path d="M1691 1065L1692.4 1066.6L1693.8 1065M1691 1071.8L1692.4 1070.2L1693.8 1071.8M1689 1067L1690.6 1068.4L1689 1069.8M1695.8 1067L1694.2 1068.4L1695.8 1069.8" stroke="#e8e8e8" stroke-width="0.9" fill="none"/></svg>
<svg class="abs" style="left:0;top:0" width="1728" height="147" viewBox="0 0 1728 147"><path d="M51.0 92.7L53.6 95.3L56.3 92.7" fill="none" stroke="#e4e4e4" stroke-width="1.8" stroke-linecap="round" stroke-linejoin="round"/><path d="M121.4 107.1L123.7 109.7L126.0 107.1" fill="none" stroke="#e4e4e4" stroke-width="1.8" stroke-linecap="round" stroke-linejoin="round"/><path d="M193.1 92.7L195.6 95.3L198.1 92.7" fill="none" stroke="#e4e4e4" stroke-width="1.8" stroke-linecap="round" stroke-linejoin="round"/><path d="M271.5 84.2L274.1 86.8L276.6 84.2" fill="none" stroke="#e4e4e4" stroke-width="1.8" stroke-linecap="round" stroke-linejoin="round"/><path d="M275.9 129.5L278.4 132.1L280.9 129.5" fill="none" stroke="#e4e4e4" stroke-width="1.8" stroke-linecap="round" stroke-linejoin="round"/><path d="M472.1 91.0L475.1 93.8L478.2 91.0" fill="none" stroke="#e4e4e4" stroke-width="1.8" stroke-linecap="round" stroke-linejoin="round"/><path d="M530.0 91.0L532.6 93.8L535.3 91.0" fill="none" stroke="#e4e4e4" stroke-width="1.8" stroke-linecap="round" stroke-linejoin="round"/><path d="M494.7 123.3L497.3 125.9L499.9 123.3" fill="none" stroke="#e4e4e4" stroke-width="1.8" stroke-linecap="round" stroke-linejoin="round"/><path d="M533.7 123.3L536.4 125.9L539.1 123.3" fill="none" stroke="#e4e4e4" stroke-width="1.8" stroke-linecap="round" stroke-linejoin="round"/><path d="M588.4 123.3L591.0 125.9L593.6 123.3" fill="none" stroke="#e4e4e4" stroke-width="1.8" stroke-linecap="round" stroke-linejoin="round"/><path d="M627.5 123.3L630.1 125.9L632.8 123.3" fill="none" stroke="#e4e4e4" stroke-width="1.8" stroke-linecap="round" stroke-linejoin="round"/><path d="M685.7 90.4L688.4 93.0L691.1 90.4" fill="none" stroke="#e4e4e4" stroke-width="1.8" stroke-linecap="round" stroke-linejoin="round"/><path d="M724.7 90.4L727.5 93.0L730.3 90.4" fill="none" stroke="#e4e4e4" stroke-width="1.8" stroke-linecap="round" stroke-linejoin="round"/><path d="M848.4 90.4L851.0 93.0L853.6 90.4" fill="none" stroke="#e4e4e4" stroke-width="1.8" stroke-linecap="round" stroke-linejoin="round"/><path d="M903.0 90.4L905.6 93.0L908.3 90.4" fill="none" stroke="#e4e4e4" stroke-width="1.8" stroke-linecap="round" stroke-linejoin="round"/><path d="M958.6 92.1L961.3 94.9L964.1 92.1" fill="none" stroke="#e4e4e4" stroke-width="1.8" stroke-linecap="round" stroke-linejoin="round"/><path d="M808.2 123.3L810.9 125.9L813.6 123.3" fill="none" stroke="#e4e4e4" stroke-width="1.8" stroke-linecap="round" stroke-linejoin="round"/><path d="M847.1 123.3L849.8 125.9L852.6 123.3" fill="none" stroke="#e4e4e4" stroke-width="1.8" stroke-linecap="round" stroke-linejoin="round"/><path d="M1035.0 92.5L1037.8 95.1L1040.5 92.5" fill="none" stroke="#e4e4e4" stroke-width="1.8" stroke-linecap="round" stroke-linejoin="round"/><path d="M1086.7 92.5L1089.3 95.1L1092.0 92.5" fill="none" stroke="#e4e4e4" stroke-width="1.8" stroke-linecap="round" stroke-linejoin="round"/><path d="M1196.7 92.5L1199.3 95.1L1202.0 92.5" fill="none" stroke="#e4e4e4" stroke-width="1.8" stroke-linecap="round" stroke-linejoin="round"/><path d="M1248.2 92.5L1250.8 95.1L1253.3 92.5" fill="none" stroke="#e4e4e4" stroke-width="1.8" stroke-linecap="round" stroke-linejoin="round"/><path d="M1342.0 90.5L1344.5 93.1L1347.0 90.5" fill="none" stroke="#e4e4e4" stroke-width="1.8" stroke-linecap="round" stroke-linejoin="round"/><path d="M1364.9 123.4L1367.2 126.0L1369.6 123.4" fill="none" stroke="#e4e4e4" stroke-width="1.8" stroke-linecap="round" stroke-linejoin="round"/><path d="M205.8 18.6L208.0 21.2L210.2 18.6" fill="none" stroke="#dcdcdc" stroke-width="1.5" stroke-linecap="round" stroke-linejoin="round"/><path d="M1024.2 17.6L1027.6 20.8L1031.0 17.6" fill="none" stroke="#7c7c7c" stroke-width="1.4" stroke-linecap="round" stroke-linejoin="round"/><path d="M130.4 19.4L137.9 12.2L145.4 19.4" stroke="#e4e4e4" stroke-width="2.0" fill="none" stroke-linejoin="round" stroke-linecap="round" /><path d="M132.3 18.6L137.9 13.6L143.6 18.6V26.6H139.8V21.4H136V26.6H132.3Z" fill="#f4f4f4"/><path d="M156.2 12.5H169.3V20M156.2 12.5V24.8H162" stroke="#e4e4e4" stroke-width="1.7" fill="none" stroke-linejoin="round" stroke-linecap="round" /><path d="M158.6 12.8V16.6H167.2V12.8" stroke="#e4e4e4" stroke-width="1.5" fill="none" stroke-linejoin="round" stroke-linecap="round" /><rect x="157.6" y="21" width="4" height="4.4" fill="#f0f0f0"/><circle cx="167.2" cy="23.2" r="5.6" fill="#404040"/><path d="M163.3 22.4A4 4 0 0 1 170.6 21M171.1 24A4 4 0 0 1 163.8 25.4" stroke="#e4e4e4" stroke-width="1.5" fill="none" stroke-linejoin="round" stroke-linecap="round" /><path d="M171.6 19.2V22.2H168.6ZM162.8 27.2V24.2H165.8Z" fill="#f0f0f0"/><path d="M187.4 12.9L182.6 17.9L187.4 22.9M182.9 17.9H192.2A4.3 4.3 0 0 1 192.2 26.4H190.6" stroke="#e4e4e4" stroke-width="1.9" fill="none" stroke-linejoin="round" stroke-linecap="round" /><path d="M222.4 16.4A6.3 6.3 0 1 0 233.6 16.2" stroke="#777" stroke-width="1.9" fill="none" stroke-linejoin="round" stroke-linecap="round" /><path d="M227.8 13.2H234.6V20" stroke="#777" stroke-width="1.9" fill="none" stroke-linejoin="round" stroke-linecap="round" /><rect x="250.2" y="16.9" width="8" height="1.6" fill="#eee"/><path d="M250.2 20.1H258.2L254.2 24.6Z" fill="#eee"/><path d="M699 12.2H705.6L710 16.6V27H699Z" fill="#f6f6f6"/><path d="M705.6 12.2V16.6H710Z" fill="#d8d8d8"/><rect x="696.6" y="16" width="7.4" height="7" rx="1" fill="#d0522a"/><text x="698.4" y="22.1" font-family="Liberation Sans" font-size="6.2" fill="#fff" font-weight="bold" font-style="normal" text-anchor="start">P</text><path d="M705.6 18.6L708 20L705.6 21.4Z" fill="#e0764a"/><circle cx="1674.1" cy="18.3" r="4.9" fill="none" stroke="#eee" stroke-width="1.5"/><path d="M1677.7 22L1682.2 26.2" stroke="#eee" stroke-width="1.7" fill="none" stroke-linejoin="round" stroke-linecap="round" /><circle cx="1708.4" cy="19.6" r="7.7" fill="none" stroke="#eee" stroke-width="1.4"/><circle cx="1705.8" cy="17.4" r="1.05" fill="#eee"/><circle cx="1711" cy="17.4" r="1.05" fill="#eee"/><path d="M1704 21.4A4.6 4.6 0 0 0 1712.8 21.4" stroke="#eee" stroke-width="1.4" fill="none" stroke-linejoin="round" stroke-linecap="round" /><path d="M794.2 56.4C794.2 54.6 792.2 53.6 792.2 50.8A5.2 5.2 0 0 1 802.6 50.8C802.6 53.6 800.6 54.6 800.6 56.4Z" stroke="#d8d8d8" stroke-width="1.2" fill="none" stroke-linejoin="round" stroke-linecap="round" /><path d="M795 58.6H799.8M795.6 60.6H799.2" stroke="#d8d8d8" stroke-width="1.2" fill="none" stroke-linejoin="round" stroke-linecap="round" /><path d="M1552 54.6H1549.8V61.2H1559.6V58.4" stroke="#e6e6e6" stroke-width="1.3" fill="none" stroke-linejoin="round" stroke-linecap="round" /><path d="M1552.4 58.6C1552.8 55.2 1555 53.4 1558 53.2V51L1562 54.4L1558 57.8V55.6C1555.6 55.6 1553.8 56.6 1552.4 58.6Z" stroke="#e6e6e6" stroke-width="1.2" fill="none" stroke-linejoin="round" stroke-linecap="round" /><path d="M1629 50.4H1640V58.2H1634.6L1632.4 60.8V58.2H1629Z" stroke="#e6e6e6" stroke-width="1.3" fill="none" stroke-linejoin="round" stroke-linecap="round" /><path d="M21.4 84.6H18.5V106.6H30.4M35.8 84.6H38V90.8" stroke="#f2ab3e" stroke-width="2.6" fill="none" stroke-linejoin="round" stroke-linecap="round" stroke-linecap="butt" stroke-linejoin="miter"/><path d="M23 86.6V84.2H25.4C26 83.4 26 82 26.6 81.2A2.6 2.6 0 0 1 30.8 81.2C31.4 82 31.4 83.4 32 84.2H34.4V86.6Z" stroke="#9c9c9c" stroke-width="1.4" fill="none" stroke-linejoin="round" stroke-linecap="round" /><rect x="31.4" y="91.9" width="13.5" height="17.5" rx="0" stroke="#d0d0d0" stroke-width="1.4" fill="#2c2c2c"/><path d="M70 78L75.6 89.8M76 78L70.4 89.8" stroke="#d6d6d6" stroke-width="1.2" fill="none" stroke-linejoin="round" stroke-linecap="round" /><circle cx="69.9" cy="91.7" r="1.7" fill="none" stroke="#4f97e0" stroke-width="1.3"/><circle cx="76.1" cy="91.7" r="1.7" fill="none" stroke="#4f97e0" stroke-width="1.3"/><path d="M69.4 113.4H65.6V100.6H70.6L72.6 102.6" stroke="#d6d6d6" stroke-width="1.2" fill="none" stroke-linejoin="round" stroke-linecap="round" /><path d="M71.8 104.6H77.4L80.6 107.8V115.6H71.8Z" stroke="#d6d6d6" stroke-width="1.2" fill="#2a2a2a" stroke-linejoin="round" stroke-linecap="round" /><path d="M77.2 104.8V108H80.4M74.2 110.6H78.4M74.2 112.6H78.4" stroke="#d6d6d6" stroke-width="1.0" fill="none" stroke-linejoin="round" stroke-linecap="round" /><path d="M65 129.6L72.4 137L78.2 131.2L70.8 123.8Z" fill="#2a2a2a"/><path d="M65.2 129.8L72.2 136.8L75.6 133.4C73 133 70.4 131.2 69 128.6L67.4 127.6Z" fill="#f0a83e"/><path d="M65 129.6L69.2 125.4L76.6 132.8L72.4 137Z" stroke="#f0f0f0" stroke-width="1.2" fill="none" stroke-linejoin="round" stroke-linecap="round" /><path d="M69.6 125L71.6 123L79 130.4L77 132.4Z" stroke="#f0f0f0" stroke-width="1.1" fill="#2a2a2a" stroke-linejoin="round" stroke-linecap="round" /><path d="M74.4 125.4L78.6 121.2A1.5 1.5 0 0 1 81 123.4L76.6 127.8" stroke="#f0f0f0" stroke-width="1.2" fill="#2a2a2a" stroke-linejoin="round" stroke-linecap="round" /><rect x="156.6" y="82.6" width="28.2" height="22.0" rx="0" stroke="#cfcfcf" stroke-width="1.3" fill="none"/><rect x="159.8" y="86.2" width="22.0" height="16.4" rx="0" stroke="#8c8c8c" stroke-width="1.3" fill="none"/><path d="M159.8 90.2H181.8M170.4 90.2V102.6" stroke="#8c8c8c" stroke-width="1.3" fill="none" stroke-linejoin="round" stroke-linecap="round" /><rect x="158" y="84" width="7" height="8.6" fill="#292929"/><path d="M161.6 77.2V92.6M154 85H169.4" stroke="#86d088" stroke-width="1.9" fill="none" stroke-linejoin="round" stroke-linecap="round" stroke-linecap="butt"/><rect x="207.2" y="78.7" width="15.4" height="12.6" rx="0" stroke="#d4d4d4" stroke-width="1.3" fill="none"/><rect x="209.8" y="81.2" width="10.2" height="7.6" rx="0" stroke="#8c8c8c" stroke-width="1.1" fill="none"/><path d="M209.8 83.2H220M214.9 83.2V88.8" stroke="#8c8c8c" stroke-width="1.1" fill="none" stroke-linejoin="round" stroke-linecap="round" /><rect x="207.2" y="101.5" width="15.4" height="12.2" rx="0" stroke="#d4d4d4" stroke-width="1.3" fill="none"/><rect x="209.8" y="104" width="10.2" height="7.2" rx="0" stroke="#8c8c8c" stroke-width="1.1" fill="none"/><rect x="205.4" y="99.4" width="9.4" height="8" fill="#292929"/><path d="M210.4 100.2L207.4 103.2L210.4 106.2M207.6 103.2H211.4C213.4 103.2 214.6 104.8 214.6 107" stroke="#5a9fe6" stroke-width="1.5" fill="none" stroke-linejoin="round" stroke-linecap="round" /><rect x="206.9" y="122.2" width="15.6" height="3" fill="#5fa86c"/><rect x="207.2" y="127.3" width="15.0" height="11.3" rx="0" stroke="#d4d4d4" stroke-width="1.3" fill="none"/><rect x="209.8" y="129.6" width="9.8" height="6.6" rx="0" stroke="#8c8c8c" stroke-width="1.1" fill="none"/><text transform="translate(547.4 96.9) scale(0.9 1)" x="0" y="0" font-family="Liberation Sans" font-size="19.4" fill="#e2e2e2" font-weight="normal" font-style="normal" text-anchor="start">A</text><path d="M558.6 87L560.6 84.8L562.6 87" stroke="#7db6ee" stroke-width="1.2" fill="none" stroke-linejoin="round" stroke-linecap="round" /><text transform="translate(576 96.9) scale(0.9 1)" x="0" y="0" font-family="Liberation Sans" font-size="15.4" fill="#e2e2e2" font-weight="normal" font-style="normal" text-anchor="start">A</text><path d="M585.6 84.6L587.6 86.8L589.6 84.6" stroke="#3f86d8" stroke-width="1.4" fill="none" stroke-linejoin="round" stroke-linecap="round" /><text transform="translate(615.4 96.9) scale(0.82 1)" x="0" y="0" font-family="Liberation Sans" font-size="19.4" fill="#e2e2e2" font-weight="normal" font-style="normal" text-anchor="start">A</text><g transform="translate(627.3 94.7) rotate(-40)"><rect x="-4" y="-2.3" width="8" height="4.6" rx="0.6" fill="#2a2a2a" stroke="#c39be0" stroke-width="1.2"/><path d="M-1 -2.3V2.3" stroke="#c39be0" stroke-width="1.1"/></g><text transform="translate(314.3 128.3) scale(0.8 1)" x="0" y="0" font-family="Liberation Sans" font-size="14.2" fill="#e6e6e6" font-weight="bold" font-style="normal" text-anchor="start">B</text><text transform="translate(341.8 128.3) scale(1.1 1)" x="0" y="0" font-family="Liberation Serif" font-size="14.2" fill="#e2e2e2" font-weight="normal" font-style="italic" text-anchor="start">I</text><text transform="translate(367.2 127.6) scale(0.84 1)" x="0" y="0" font-family="Liberation Sans" font-size="13.2" fill="#e2e2e2" font-weight="normal" font-style="normal" text-anchor="start">U</text><path d="M366.8 130.5H375.8" stroke="#e2e2e2" stroke-width="1.1" fill="none" stroke-linejoin="round" stroke-linecap="round" /><text transform="translate(392.4 129.4) scale(0.9 1)" x="0" y="0" font-family="Liberation Sans" font-size="12.6" fill="#bdbdbd" font-weight="normal" font-style="normal" text-anchor="start">ab</text><path d="M389.8 125.7H407" stroke="#bdbdbd" stroke-width="1.0" fill="none" stroke-linejoin="round" stroke-linecap="round" /><text transform="translate(421.3 129) scale(1.0 1)" x="0" y="0" font-family="Liberation Sans" font-size="14.2" fill="#e6e6e6" font-weight="normal" font-style="normal" text-anchor="start">x</text><text x="428.8" y="122.4" font-family="Liberation Sans" font-size="7.6" fill="#5a9fe6" font-weight="normal" font-style="normal" text-anchor="start">2</text><text transform="translate(448.5 129) scale(1.0 1)" x="0" y="0" font-family="Liberation Sans" font-size="14.2" fill="#e6e6e6" font-weight="normal" font-style="normal" text-anchor="start">x</text><text x="455.8" y="133" font-family="Liberation Sans" font-size="7.6" fill="#5a9fe6" font-weight="normal" font-style="normal" text-anchor="start">2</text><text transform="translate(470.4 126.1) scale(0.92 1)" x="0" y="0" font-family="Liberation Sans" font-size="13.4" fill="#e0e0e0" font-weight="normal" font-style="normal" text-anchor="start">AV</text><path d="M471.2 129.8H476.6M472.8 128.2L471.2 129.8L472.8 131.4M481 129.8H486.4M484.8 128.2L486.4 129.8L484.8 131.4" stroke="#5a9fe6" stroke-width="1.1" fill="none" stroke-linejoin="round" stroke-linecap="round" /><text transform="translate(510.2 129.7) scale(0.95 1)" x="0" y="0" font-family="Liberation Sans" font-size="14" fill="#dcdcdc" font-weight="normal" font-style="normal" text-anchor="start">Aa</text><rect x="564" y="128.2" width="17" height="4.8" fill="#f4ea3c"/><path d="M569.6 126.6L571.4 122.8L577.6 117.4A1.6 1.6 0 0 1 580 119.6L574.2 125.4Z" stroke="#e2e2e2" stroke-width="1.2" fill="#2a2a2a" stroke-linejoin="round" stroke-linecap="round" /><path d="M568.6 127.2L571 123.4L573.6 125.8Z" fill="#a8a8a8"/><text transform="translate(606.4 127.5) scale(0.96 1)" x="0" y="0" font-family="Liberation Sans" font-size="15.4" fill="#e6e6e6" font-weight="normal" font-style="normal" text-anchor="start">A</text><rect x="602.8" y="128.5" width="17.4" height="4.5" fill="#ee4e2a"/><rect x="662" y="83.6" width="2.7" height="2.7" fill="#5a9fe6"/><rect x="662" y="89.7" width="2.7" height="2.7" fill="#5a9fe6"/><rect x="662" y="96.0" width="2.7" height="2.7" fill="#5a9fe6"/><path d="M667.2 84.9H677.4M667.2 91H677.4M667.2 97.3H677.4" stroke="#d8d8d8" stroke-width="1.5" fill="none" stroke-linejoin="round" stroke-linecap="round" stroke-linecap="butt"/><text x="700.8" y="86.9" font-family="Liberation Sans" font-size="5.8" fill="#5a9fe6" font-weight="bold" font-style="normal" text-anchor="start">1</text><text x="700.8" y="93" font-family="Liberation Sans" font-size="5.8" fill="#5a9fe6" font-weight="bold" font-style="normal" text-anchor="start">2</text><text x="700.8" y="99.3" font-family="Liberation Sans" font-size="5.8" fill="#5a9fe6" font-weight="bold" font-style="normal" text-anchor="start">3</text><path d="M706.2 84.9H716.4M706.2 91H716.4M706.2 97.3H716.4" stroke="#d8d8d8" stroke-width="1.5" fill="none" stroke-linejoin="round" stroke-linecap="round" stroke-linecap="butt"/><path d="M756.4 85H771M756.4 97H771M764.4 89H771M764.4 93H771" stroke="#555" stroke-width="1.3" fill="none" stroke-linejoin="round" stroke-linecap="round" stroke-linecap="butt"/><path d="M757 91H762M758.8 89.2L757 91L758.8 92.8" stroke="#4a5a70" stroke-width="1.2" fill="none" stroke-linejoin="round" stroke-linecap="round" /><path d="M783 85H797.8M783 97H797.8M791 89H797.8M791 93H797.8" stroke="#555" stroke-width="1.3" fill="none" stroke-linejoin="round" stroke-linecap="round" stroke-linecap="butt"/><path d="M783.6 91H788.6M786.8 89.2L788.6 91L786.8 92.8" stroke="#4a5a70" stroke-width="1.2" fill="none" stroke-linejoin="round" stroke-linecap="round" /><path d="M826.9 85.4V97.4M824.4 87.6L826.9 85L829.4 87.6M824.4 95.2L826.9 97.8L829.4 95.2" stroke="#4f97e0" stroke-width="1.5" fill="none" stroke-linejoin="round" stroke-linecap="round" /><path d="M832 85H841.2M832 89H841.2M832 93H841.2M832 97H841.2" stroke="#d8d8d8" stroke-width="1.5" fill="none" stroke-linejoin="round" stroke-linecap="round" stroke-linecap="butt"/><path d="M881 88H886.4M881 91.1H886.4M881 94.2H886.4M888.4 88H893.8M888.4 91.1H893.8M888.4 94.2H893.8" stroke="#3f86d8" stroke-width="1.6" fill="none" stroke-linejoin="round" stroke-linecap="round" stroke-linecap="butt"/><path d="M921.7 82.7H941L949.7 91.3L941 99.9H921.7L929.2 91.3Z" fill="#4f9a58"/><rect x="932.6" y="93.2" width="17.8" height="10.8" rx="0" stroke="#d0d0d0" stroke-width="1.3" fill="#2a2a2a"/><path d="M936.4 97H947M936.4 100.4H947" stroke="#a0a0a0" stroke-width="1.2" fill="none" stroke-linejoin="round" stroke-linecap="round" stroke-linecap="butt"/><path d="M662.9 117.6H677.2M662.9 121.7H673.4M662.9 125.9H677.2M662.9 130H673.4" stroke="#d8d8d8" stroke-width="1.6" fill="none" stroke-linejoin="round" stroke-linecap="round" stroke-linecap="butt"/><path d="M689.8 117.6H703.9M691.9 121.7H702M689.8 125.9H703.9M691.9 130H702" stroke="#d8d8d8" stroke-width="1.6" fill="none" stroke-linejoin="round" stroke-linecap="round" stroke-linecap="butt"/><path d="M716.1 117.6H731M720.5 121.7H731M716.1 125.9H731M720.5 130H731" stroke="#d8d8d8" stroke-width="1.6" fill="none" stroke-linejoin="round" stroke-linecap="round" stroke-linecap="butt"/><path d="M743 117.6H757.9M743 121.7H757.9M743 125.9H757.9M743 130H757.9" stroke="#d8d8d8" stroke-width="1.6" fill="none" stroke-linejoin="round" stroke-linecap="round" stroke-linecap="butt"/><path d="M788.6 116.8V131.4M786 129L788.6 131.8L791.2 129" stroke="#d8d8d8" stroke-width="1.3" fill="none" stroke-linejoin="round" stroke-linecap="round" /><text transform="translate(793 123.9) scale(0.98 1)" x="0" y="0" font-family="Liberation Sans" font-size="10.2" fill="#5a9fe6" font-weight="normal" font-style="normal" text-anchor="start">A</text><path d="M796.6 125.4V131.4M794.8 129.6L796.6 131.6L798.4 129.6" stroke="#d8d8d8" stroke-width="1.2" fill="none" stroke-linejoin="round" stroke-linecap="round" /><path d="M826.4 118.8H823.6V129H826.4M836.8 118.8H839.6V129H836.8" stroke="#d0d0d0" stroke-width="1.3" fill="none" stroke-linejoin="round" stroke-linecap="round" /><path d="M827.4 123.9H835.8" stroke="#9a9a9a" stroke-width="1.3" fill="none" stroke-linejoin="round" stroke-linecap="round" /><path d="M831.6 116.6V121.6M829.6 118.6L831.6 116.4L833.6 118.6M831.6 126.2V131.4M829.6 129.4L831.6 131.6L833.6 129.4" stroke="#4f97e0" stroke-width="1.4" fill="none" stroke-linejoin="round" stroke-linecap="round" /><path d="M999.7 95.8L1006.9 88.5L1015.6 97.2L1019.5 93.5L1026.9 100.9V103.2H999.7Z" fill="#2a6fc9"/><path d="M999.9 95.6L1006.9 88.5L1021.6 103M1015.8 97L1019.5 93.5L1026.7 100.7" stroke="#62a9f2" stroke-width="1.1" fill="none" stroke-linejoin="round" stroke-linecap="round" /><path d="M1020.6 86.4A2.4 2.4 0 1 0 1023.4 89.8A2.7 2.7 0 0 1 1020.6 86.4Z" fill="#f0b050"/><rect x="999.4" y="82.5" width="27.8" height="21.0" rx="0" stroke="#cdcdcd" stroke-width="1.4" fill="none"/><rect x="1050.6" y="79.9" width="18.8" height="18.4" rx="0" stroke="#4f8fe0" stroke-width="1.0" fill="#2a6fc9"/><circle cx="1068.6" cy="97.4" r="10" fill="#2a2a2a" stroke="#e0e0e0" stroke-width="1.4"/><rect x="1101.2" y="82" width="30.0" height="23.4" rx="0" stroke="#c8c8c8" stroke-width="1.3" fill="none"/><circle cx="1101.2" cy="82" r="1.7" fill="#5a9fe6"/><circle cx="1131.2" cy="82" r="1.7" fill="#5a9fe6"/><circle cx="1101.2" cy="105.4" r="1.7" fill="#5a9fe6"/><circle cx="1131.2" cy="105.4" r="1.7" fill="#5a9fe6"/><text x="1116.3" y="100.5" font-family="Liberation Sans" font-size="18.8" fill="#5a9fe6" font-weight="normal" font-style="normal" text-anchor="middle">A</text><rect x="1164.3" y="83.1" width="20.9" height="20.4" rx="0" stroke="none" stroke-width="0" fill="#f0a43c"/><rect x="1160.8" y="80" width="11.0" height="10.4" rx="0" stroke="#c4c4c4" stroke-width="1.3" fill="#2c2c2c"/><rect x="1177.5" y="96.7" width="10.5" height="10.1" rx="0" stroke="#d4d4d4" stroke-width="1.3" fill="#2c2c2c"/><path d="M1222 107.2H1215A2.6 2.6 0 0 1 1212.4 104.6V82.6A2.6 2.6 0 0 1 1215 80H1237.6A2.6 2.6 0 0 1 1240.2 82.6V90M1240.2 97V104.6A2.6 2.6 0 0 1 1237.6 107.2H1233" stroke="#d2d2d2" stroke-width="1.4" fill="none" stroke-linejoin="round" stroke-linecap="round" /><path d="M1231 101.4L1240.4 90.4A1.2 1.2 0 0 1 1242.4 91.8L1233.2 103.2" stroke="#e8e8e8" stroke-width="1.2" fill="#2a2a2a" stroke-linejoin="round" stroke-linecap="round" /><path d="M1230.6 101L1233.8 103.6C1232.6 106.8 1228 109.2 1219.6 108.2C1224 106.8 1225.4 102 1230.6 101Z" fill="#3d86dc"/><path d="M1266.4 90.4L1271.6 85.2L1276.6 90.2L1271.4 95.4Z" stroke="#e4e4e4" stroke-width="1.2" fill="none" stroke-linejoin="round" stroke-linecap="round" /><path d="M1270.2 86.6V84.2A1.5 1.5 0 0 1 1273.2 84.2V86.8" stroke="#e4e4e4" stroke-width="1.1" fill="none" stroke-linejoin="round" stroke-linecap="round" /><path d="M1275.4 88.4C1277 87 1278.4 87.6 1278.4 90.2" stroke="#7db6ee" stroke-width="1.3" fill="none" stroke-linejoin="round" stroke-linecap="round" /><rect x="1263" y="96.1" width="17" height="3.6" fill="#f0672c"/><path d="M1272.4 117.8H1264.8V126.8H1270" stroke="#c8c8c8" stroke-width="1.3" fill="none" stroke-linejoin="round" stroke-linecap="round" /><path d="M1269.2 126.4L1270.2 123.4L1276.8 116.8A1.5 1.5 0 0 1 1279 119L1272.4 125.6Z" stroke="#4f97e0" stroke-width="1.3" fill="#2a5a9a" stroke-linejoin="round" stroke-linecap="round" /><rect x="1263" y="128.7" width="17" height="3.7" fill="#f59232"/><path d="M1409 80.2H1415.6L1424.6 88.6V107.2H1403.6V95" stroke="#d4d4d4" stroke-width="1.4" fill="none" stroke-linejoin="round" stroke-linecap="round" /><path d="M1415.6 80.4V88.6H1424.4" stroke="#d4d4d4" stroke-width="1.2" fill="none" stroke-linejoin="round" stroke-linecap="round" /><path d="M1402.4 77.7L1410.7 77.1L1406.2 84.7H1410.7L1399.2 97.5L1402.4 87.9H1398Z" fill="#3b8ee8" stroke="#292929" stroke-width="0.8"/></svg>
</div>
</body></html>
